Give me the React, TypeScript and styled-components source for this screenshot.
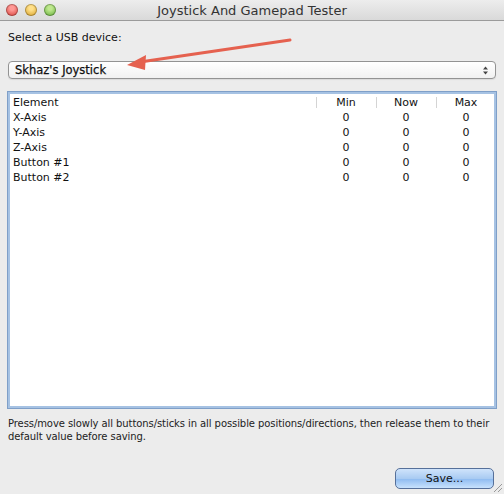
import styled, { createGlobalStyle } from 'styled-components';

const GlobalStyle = createGlobalStyle`
  html, body {
    margin: 0;
    padding: 0;
    background: #ececec;
  }
  body {
    font-family: "DejaVu Sans", "Liberation Sans", sans-serif;
    color: #111;
  }
`;

const Window = styled.div`
  position: relative;
  width: 504px;
  height: 494px;
  background: #ececec;
  display: flex;
  flex-direction: column;
  overflow: hidden;
`;

const TitleBar = styled.div`
  height: 21px;
  flex: none;
  display: flex;
  align-items: center;
  position: relative;
  background: linear-gradient(#ededed, #d9d9d9);
  border-bottom: 1px solid #9b9b9b;
  box-sizing: border-box;
`;

const Lights = styled.div`
  display: flex;
  gap: 7px;
  padding-left: 6px;
  z-index: 1;
`;

const Light = styled.span<{ $c: string; $d: string }>`
  width: 12px;
  height: 12px;
  border-radius: 50%;
  background: radial-gradient(circle at 50% 35%, ${p => p.$c} 20%, ${p => p.$d} 90%);
  box-shadow: inset 0 0 0 1px rgba(0, 0, 0, 0.25);
`;

const Title = styled.div`
  position: absolute;
  left: 0;
  right: 0;
  text-align: center;
  font-size: 13px;
  color: #333;
`;

const Content = styled.div`
  flex: 1;
  display: flex;
  flex-direction: column;
  padding: 10px 7px 0 7px;
`;

const Label = styled.div`
  font-size: 11px;
  padding-left: 1px;
  height: 14px;
`;

const Popup = styled.div`
  margin: 16px 1px 0 1px;
  height: 18px;
  box-sizing: border-box;
  border: 1px solid #939393;
  border-radius: 4px;
  background: linear-gradient(#ffffff, #f1f1f1);
  box-shadow: 0 1px 1px rgba(0, 0, 0, 0.08);
  display: flex;
  align-items: center;
  justify-content: space-between;
  padding: 0 7px 0 6px;
  font-size: 11.5px;
  -webkit-text-stroke: 0.25px #111;
`;

const Stepper = styled.svg`
  display: block;
`;

const TableBox = styled.div`
  margin-top: 12px;
  height: 318px;
  box-sizing: border-box;
  border: 3px solid #a6c2e3;
  outline: 1px solid #7f9fc8;
  outline-offset: -1px;
  background: #fff;
  font-size: 11px;
`;

const Row = styled.div<{ $head?: boolean }>`
  display: grid;
  grid-template-columns: 303px 60px 60px 60px;
  height: ${p => (p.$head ? '16px' : '15px')};
  align-items: center;
  padding-left: 3px;
`;

const Cell = styled.div<{ $num?: boolean; $sep?: boolean }>`
  text-align: ${p => (p.$num ? 'center' : 'left')};
  line-height: 15px;
  position: relative;
  ${p =>
    p.$sep &&
    `&::before {
      content: '';
      position: absolute;
      left: 0;
      top: 2px;
      bottom: 2px;
      border-left: 1px solid #d4d4d4;
    }`}
`;

const Footer = styled.div`
  font-size: 10px;
  line-height: 13px;
  letter-spacing: -0.08px;
  margin-top: 8px;
  padding-left: 1px;
  color: #222;
`;

const ButtonRow = styled.div`
  display: flex;
  justify-content: flex-end;
  margin-top: 25px;
  padding-right: 3px;
`;

const SaveButton = styled.button`
  width: 99px;
  height: 21px;
  border: 1px solid #56709a;
  border-radius: 5px;
  background: linear-gradient(#cfe3fb 0%, #a9cbf2 50%, #8dbaf0 51%, #c8e2fd 100%);
  font-family: "DejaVu Sans", sans-serif;
  font-size: 11px;
  color: #111;
  padding: 0;
`;

const Overlay = styled.svg`
  position: absolute;
  left: 0;
  top: 0;
  pointer-events: none;
`;

const Grip = styled.svg`
  position: absolute;
  right: 1px;
  bottom: 1px;
`;

const rows = ['X-Axis', 'Y-Axis', 'Z-Axis', 'Button #1', 'Button #2'];

export const App = () => {
  return (
    <Window>
      <GlobalStyle />
      <TitleBar>
        <Lights>
          <Light $c="#ff9a96" $d="#d8423c" />
          <Light $c="#ffe08a" $d="#d9a32a" />
          <Light $c="#bfe88f" $d="#66b03b" />
        </Lights>
        <Title>Joystick And Gamepad Tester</Title>
      </TitleBar>
      <Content>
        <Label>Select a USB device:</Label>
        <Popup>
          <span>Skhaz's Joystick</span>
          <Stepper width="5" height="9" viewBox="0 0 5 9">
            <polygon points="2.5,0.5 5,3.5 0,3.5" fill="#444" />
            <polygon points="0,5.5 5,5.5 2.5,8.5" fill="#444" />
          </Stepper>
        </Popup>
        <TableBox>
          <Row $head>
            <Cell>Element</Cell>
            <Cell $num $sep>Min</Cell>
            <Cell $num $sep>Now</Cell>
            <Cell $num $sep>Max</Cell>
          </Row>
          {rows.map(r => (
            <Row key={r}>
              <Cell>{r}</Cell>
              <Cell $num>0</Cell>
              <Cell $num>0</Cell>
              <Cell $num>0</Cell>
            </Row>
          ))}
        </TableBox>
        <Footer>
          Press/move slowly all buttons/sticks in all possible positions/directions, then release them to their default value before saving.
        </Footer>
        <ButtonRow>
          <SaveButton>Save...</SaveButton>
        </ButtonRow>
      </Content>
      <Overlay width="504" height="494">
        <line x1="290" y1="40" x2="140" y2="62" stroke="#e5614f" strokeWidth="3" strokeLinecap="round" />
        <polygon points="127,65 146,55 145,70" fill="#e5614f" />
      </Overlay>
      <Grip width="10" height="10">
        <line x1="1" y1="9" x2="9" y2="1" stroke="#999" />
        <line x1="5" y1="9" x2="9" y2="5" stroke="#999" />
      </Grip>
    </Window>
  );
};

export default App;
